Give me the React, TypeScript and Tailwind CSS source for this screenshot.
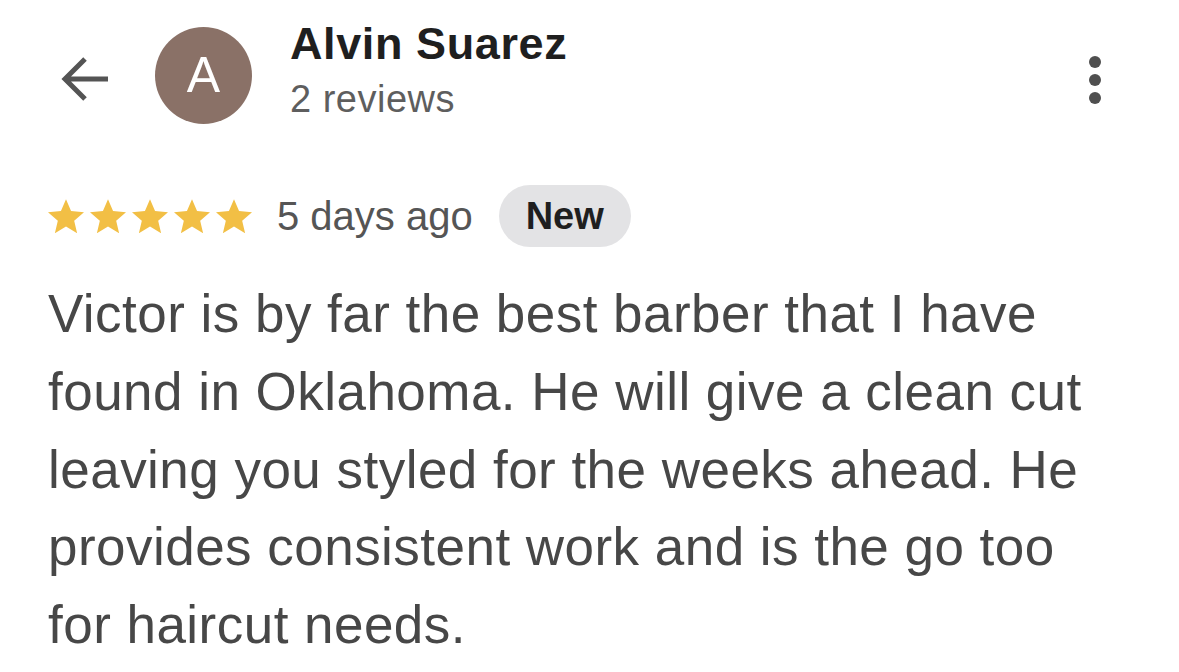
import React from "react";

const Star = () => (
  <svg width="36" height="35" viewBox="2 2 20 19.3" className="block">
    <path
      d="M12 17.27L18.18 21l-1.64-7.03L22 9.24l-7.19-.61L12 2 9.19 8.63 2 9.24l5.46 4.73L5.82 21z"
      fill="#f2bf45"
    />
  </svg>
);

export default function App() {
  const lines = [
    "Victor is by far the best barber that I have",
    "found in Oklahoma. He will give a clean cut",
    "leaving you styled for the weeks ahead. He",
    "provides consistent work and is the go too",
    "for haircut needs.",
  ];
  return (
    <div className="w-[1179px] h-[672px] bg-white overflow-hidden font-['Liberation_Sans',Arial,sans-serif]">
      <div className="flex items-start pt-[20px]">
        <svg
          width="50"
          height="50"
          viewBox="0 0 50 50"
          className="ml-[59px] mt-[34px] shrink-0"
        >
          <path
            d="M49 25H6 M26 5 L6 25 L26 45"
            fill="none"
            stroke="#545454"
            strokeWidth="5"
          />
        </svg>
        <div className="ml-[46px] mt-[7px] w-[97px] h-[97px] rounded-full bg-[#8a7167] flex items-center justify-center shrink-0">
          <span className="text-white text-[50px] leading-none mt-[-2px]">A</span>
        </div>
        <div className="ml-[38px] flex flex-col">
          <div className="text-[45px] leading-[48px] font-bold tracking-[0.6px] text-[#1f1f1f]">
            Alvin Suarez
          </div>
          <div className="mt-[9px] text-[38px] leading-[44px] tracking-[0.5px] text-[#5e5e5e]">
            2 reviews
          </div>
        </div>
        <div className="ml-auto mr-[78px] mt-[36px] flex flex-col gap-[6px]">
          <div className="w-[12px] h-[12px] rounded-full bg-[#4f4f4f]" />
          <div className="w-[12px] h-[12px] rounded-full bg-[#4f4f4f]" />
          <div className="w-[12px] h-[12px] rounded-full bg-[#4f4f4f]" />
        </div>
      </div>

      <div className="mt-[61px] ml-[48px] flex items-center h-[62px]">
        <div className="flex gap-[6px]">
          <Star />
          <Star />
          <Star />
          <Star />
          <Star />
        </div>
        <span className="ml-[25px] text-[40px] leading-none text-[#555555]">
          5 days ago
        </span>
        <div className="ml-[26px] h-[62px] w-[132px] rounded-full bg-[#e3e3e5] flex items-center justify-center">
          <span className="text-[38px] leading-none font-semibold text-[#1f1f1f]">New</span>
        </div>
      </div>

      <div className="mt-[28px] ml-[48px] text-[53px] leading-[77.75px] tracking-[0.47px] text-[#474747]">
        {lines.map((l, i) => (
          <div key={i} className="whitespace-nowrap">
            {l}
          </div>
        ))}
      </div>
    </div>
  );
}
